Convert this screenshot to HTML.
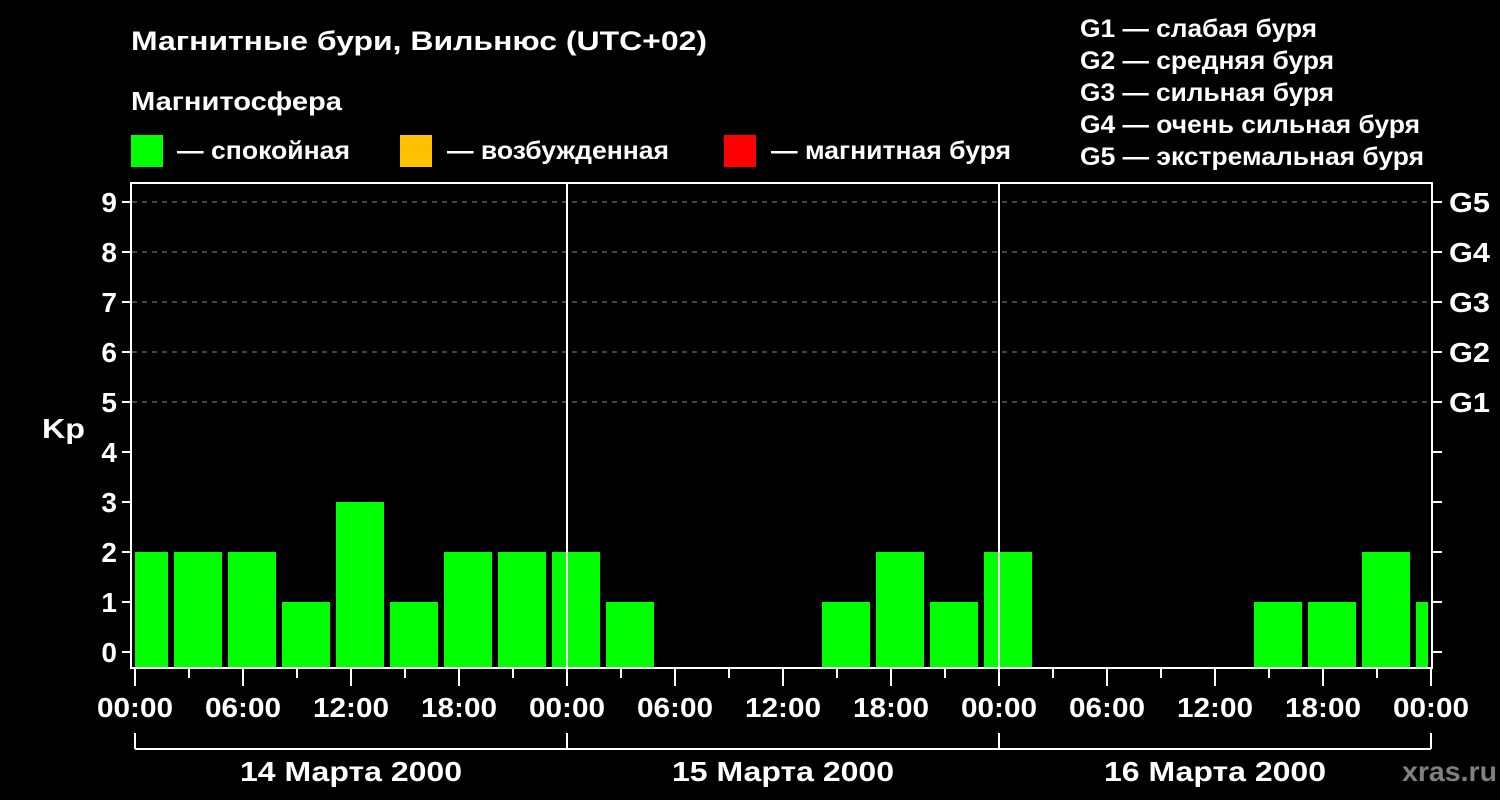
<!DOCTYPE html>
<html><head><meta charset="utf-8"><style>
html,body{margin:0;padding:0;background:#000;width:1500px;height:800px;overflow:hidden}
svg{display:block}
text{font-family:"Liberation Sans",Arial,sans-serif;font-weight:bold;fill:#fff}
</style></head><body>
<svg width="1500" height="800" viewBox="0 0 1500 800" xmlns="http://www.w3.org/2000/svg">
<text x="131" y="50" font-size="27" textLength="576" lengthAdjust="spacingAndGlyphs">Магнитные бури, Вильнюс (UTC+02)</text>
<text x="131" y="110" font-size="26" textLength="211" lengthAdjust="spacingAndGlyphs">Магнитосфера</text>
<rect x="131" y="135" width="32" height="32" fill="#00ff00"/>
<text x="177" y="159" font-size="25" textLength="173" lengthAdjust="spacingAndGlyphs">— спокойная</text>
<rect x="400" y="135" width="32" height="32" fill="#ffc000"/>
<text x="447" y="159" font-size="25" textLength="222" lengthAdjust="spacingAndGlyphs">— возбужденная</text>
<rect x="724" y="135" width="32" height="32" fill="#ff0000"/>
<text x="771" y="159" font-size="25" textLength="240" lengthAdjust="spacingAndGlyphs">— магнитная буря</text>
<g font-size="25">
<text x="1080" y="37" textLength="237" lengthAdjust="spacingAndGlyphs">G1 — слабая буря</text>
<text x="1080" y="69" textLength="254" lengthAdjust="spacingAndGlyphs">G2 — средняя буря</text>
<text x="1080" y="101" textLength="254" lengthAdjust="spacingAndGlyphs">G3 — сильная буря</text>
<text x="1080" y="133" textLength="340" lengthAdjust="spacingAndGlyphs">G4 — очень сильная буря</text>
<text x="1080" y="165" textLength="344" lengthAdjust="spacingAndGlyphs">G5 — экстремальная буря</text>
</g>
<g stroke="#888" stroke-width="1" stroke-dasharray="5,5">
<line x1="132" y1="202" x2="1431" y2="202"/>
<line x1="132" y1="252" x2="1431" y2="252"/>
<line x1="132" y1="302" x2="1431" y2="302"/>
<line x1="132" y1="352" x2="1431" y2="352"/>
<line x1="132" y1="402" x2="1431" y2="402"/>
</g>
<g fill="#00ff00">
<rect x="135" y="552" width="33" height="116"/>
<rect x="174" y="552" width="48" height="116"/>
<rect x="228" y="552" width="48" height="116"/>
<rect x="282" y="602" width="48" height="66"/>
<rect x="336" y="502" width="48" height="166"/>
<rect x="390" y="602" width="48" height="66"/>
<rect x="444" y="552" width="48" height="116"/>
<rect x="498" y="552" width="48" height="116"/>
<rect x="552" y="552" width="48" height="116"/>
<rect x="606" y="602" width="48" height="66"/>
<rect x="822" y="602" width="48" height="66"/>
<rect x="876" y="552" width="48" height="116"/>
<rect x="930" y="602" width="48" height="66"/>
<rect x="984" y="552" width="48" height="116"/>
<rect x="1254" y="602" width="48" height="66"/>
<rect x="1308" y="602" width="48" height="66"/>
<rect x="1362" y="552" width="48" height="116"/>
<rect x="1416" y="602" width="12" height="66"/>
</g>
<g stroke="#fff" stroke-width="2" fill="none">
<rect x="131" y="183" width="1301" height="485"/>
<line x1="567" y1="183" x2="567" y2="668"/>
<line x1="999" y1="183" x2="999" y2="668"/>
</g>
<g stroke="#fff" stroke-width="2">
<line x1="122" y1="202" x2="131" y2="202"/><line x1="122" y1="252" x2="131" y2="252"/>
<line x1="122" y1="302" x2="131" y2="302"/><line x1="122" y1="352" x2="131" y2="352"/>
<line x1="122" y1="402" x2="131" y2="402"/><line x1="122" y1="452" x2="131" y2="452"/>
<line x1="122" y1="502" x2="131" y2="502"/><line x1="122" y1="552" x2="131" y2="552"/>
<line x1="122" y1="602" x2="131" y2="602"/><line x1="122" y1="652" x2="131" y2="652"/>
<line x1="1432" y1="202" x2="1442" y2="202"/><line x1="1432" y1="252" x2="1442" y2="252"/>
<line x1="1432" y1="302" x2="1442" y2="302"/><line x1="1432" y1="352" x2="1442" y2="352"/>
<line x1="1432" y1="402" x2="1442" y2="402"/><line x1="1432" y1="452" x2="1442" y2="452"/>
<line x1="1432" y1="502" x2="1442" y2="502"/><line x1="1432" y1="552" x2="1442" y2="552"/>
<line x1="1432" y1="602" x2="1442" y2="602"/><line x1="1432" y1="652" x2="1442" y2="652"/>
</g>
<g font-size="28" text-anchor="end">
<text x="117" y="212">9</text><text x="117" y="262">8</text><text x="117" y="312">7</text>
<text x="117" y="362">6</text><text x="117" y="412">5</text><text x="117" y="462">4</text>
<text x="117" y="512">3</text><text x="117" y="562">2</text><text x="117" y="612">1</text>
<text x="117" y="662">0</text>
</g>
<text x="42" y="438" font-size="28" textLength="43" lengthAdjust="spacingAndGlyphs">Kp</text>
<g font-size="28">
<text x="1449" y="212" textLength="41" lengthAdjust="spacingAndGlyphs">G5</text>
<text x="1449" y="262" textLength="41" lengthAdjust="spacingAndGlyphs">G4</text>
<text x="1449" y="312" textLength="41" lengthAdjust="spacingAndGlyphs">G3</text>
<text x="1449" y="362" textLength="41" lengthAdjust="spacingAndGlyphs">G2</text>
<text x="1449" y="412" textLength="41" lengthAdjust="spacingAndGlyphs">G1</text>
</g>
<g stroke="#fff" stroke-width="2">
<line x1="135" y1="668" x2="135" y2="686"/><line x1="189" y1="668" x2="189" y2="678"/>
<line x1="243" y1="668" x2="243" y2="686"/><line x1="297" y1="668" x2="297" y2="678"/>
<line x1="351" y1="668" x2="351" y2="686"/><line x1="405" y1="668" x2="405" y2="678"/>
<line x1="459" y1="668" x2="459" y2="686"/><line x1="513" y1="668" x2="513" y2="678"/>
<line x1="567" y1="668" x2="567" y2="686"/><line x1="621" y1="668" x2="621" y2="678"/>
<line x1="675" y1="668" x2="675" y2="686"/><line x1="729" y1="668" x2="729" y2="678"/>
<line x1="783" y1="668" x2="783" y2="686"/><line x1="837" y1="668" x2="837" y2="678"/>
<line x1="891" y1="668" x2="891" y2="686"/><line x1="945" y1="668" x2="945" y2="678"/>
<line x1="999" y1="668" x2="999" y2="686"/><line x1="1053" y1="668" x2="1053" y2="678"/>
<line x1="1107" y1="668" x2="1107" y2="686"/><line x1="1161" y1="668" x2="1161" y2="678"/>
<line x1="1215" y1="668" x2="1215" y2="686"/><line x1="1269" y1="668" x2="1269" y2="678"/>
<line x1="1323" y1="668" x2="1323" y2="686"/><line x1="1377" y1="668" x2="1377" y2="678"/>
<line x1="1431" y1="668" x2="1431" y2="686"/>
</g>
<g font-size="28">
<text x="97" y="717" textLength="76" lengthAdjust="spacingAndGlyphs">00:00</text>
<text x="205" y="717" textLength="76" lengthAdjust="spacingAndGlyphs">06:00</text>
<text x="313" y="717" textLength="76" lengthAdjust="spacingAndGlyphs">12:00</text>
<text x="421" y="717" textLength="76" lengthAdjust="spacingAndGlyphs">18:00</text>
<text x="529" y="717" textLength="76" lengthAdjust="spacingAndGlyphs">00:00</text>
<text x="637" y="717" textLength="76" lengthAdjust="spacingAndGlyphs">06:00</text>
<text x="745" y="717" textLength="76" lengthAdjust="spacingAndGlyphs">12:00</text>
<text x="853" y="717" textLength="76" lengthAdjust="spacingAndGlyphs">18:00</text>
<text x="961" y="717" textLength="76" lengthAdjust="spacingAndGlyphs">00:00</text>
<text x="1069" y="717" textLength="76" lengthAdjust="spacingAndGlyphs">06:00</text>
<text x="1177" y="717" textLength="76" lengthAdjust="spacingAndGlyphs">12:00</text>
<text x="1285" y="717" textLength="76" lengthAdjust="spacingAndGlyphs">18:00</text>
<text x="1393" y="717" textLength="76" lengthAdjust="spacingAndGlyphs">00:00</text>
</g>
<g stroke="#fff" stroke-width="2" fill="none">
<line x1="135" y1="749" x2="1431" y2="749"/>
<line x1="135" y1="733" x2="135" y2="749"/><line x1="567" y1="733" x2="567" y2="749"/>
<line x1="999" y1="733" x2="999" y2="749"/><line x1="1431" y1="733" x2="1431" y2="749"/>
</g>
<g font-size="28">
<text x="240" y="781" textLength="222" lengthAdjust="spacingAndGlyphs">14 Марта 2000</text>
<text x="672" y="781" textLength="222" lengthAdjust="spacingAndGlyphs">15 Марта 2000</text>
<text x="1104" y="781" textLength="222" lengthAdjust="spacingAndGlyphs">16 Марта 2000</text>
</g>
<text x="1402" y="781" font-size="28" textLength="95" lengthAdjust="spacingAndGlyphs" style="fill:#808080">xras.ru</text>
</svg>
</body></html>
